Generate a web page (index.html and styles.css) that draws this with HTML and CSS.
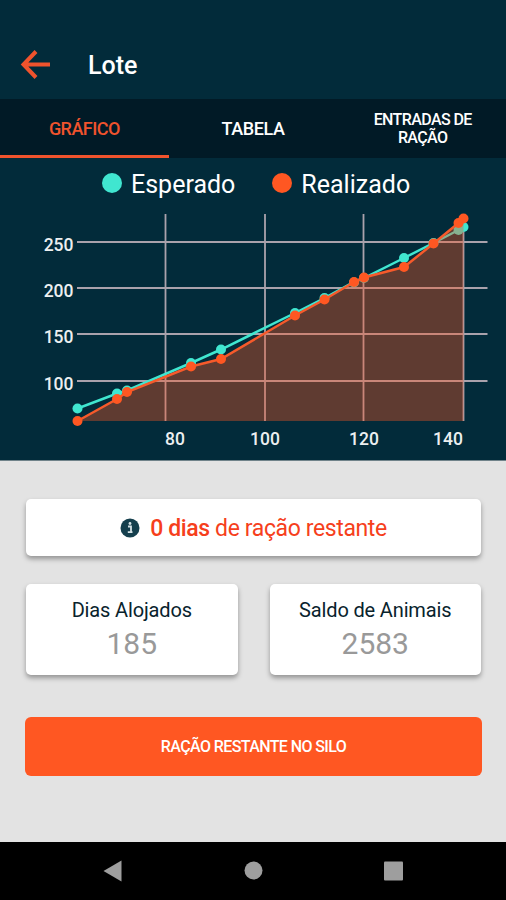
FILE: index.html
```html
<!DOCTYPE html>
<html lang="pt-BR">
<head>
    <meta charset="UTF-8">
    <meta name="viewport" content="width=device-width, initial-scale=1.0">
    <title>Lote</title>
    <link rel="stylesheet" href="styles.css">
</head>
<body>
    <div class="app">
        <header class="header">
            <svg class="back" width="30" height="30" viewBox="0 0 30 30">
                <path d="M30 13.500H4M16 0.500L3.500 13.500l12.500 13"/>
            </svg>
            <h1 class="title">Lote</h1>
        </header>
        <nav class="tabs">
            <div class="tab active"><span class="tab-text">GRÁFICO</span></div>
            <div class="tab"><span class="tab-text">TABELA</span></div>
            <div class="tab small"><span class="tab-text">ENTRADAS DE<br>RAÇÃO</span></div>
        </nav>
        <section class="chart">
            <div class="legend">
                <div class="legend-item"><span class="dot expected"></span><span class="legend-text">Esperado</span></div>
                <div class="legend-item"><span class="dot done"></span><span class="legend-text">Realizado</span></div>
            </div>
            <svg class="plot" width="506" height="252" viewBox="0 0 506 252">
                <g class="grid">
                    <path d="M77 33H487.500M77 79H487.500M77 125H487.500M77 172H487.500"/>
                    <path d="M165.500 5V212M265 5V212M363.500 5V212M463.500 5V212"/>
                </g>
                <!-- esperado -->
                <polyline class="line-expected" points="77.5,199.5 117,184.500 127,181.500 191,154 221,140.500 295,104 324.500,89 354,73 364,69 404,49 433.500,34 458.500,21 463.500,18"/>
                <g class="points-expected">
                    <circle cx="77.5" cy="199.5" r="5"/>
                    <circle cx="117" cy="184.5" r="5"/>
                    <circle cx="127" cy="181.5" r="5"/>
                    <circle cx="191" cy="154" r="5"/>
                    <circle cx="221" cy="140.5" r="5"/>
                    <circle cx="295" cy="104" r="5"/>
                    <circle cx="324.5" cy="89" r="5"/>
                    <circle cx="354" cy="73.5" r="5"/>
                    <circle cx="364" cy="69" r="5"/>
                    <circle cx="404" cy="49" r="5"/>
                    <circle cx="433.5" cy="34" r="5"/>
                    <circle cx="458.5" cy="21" r="5"/>
                    <circle cx="463.5" cy="18" r="5"/>
                </g>
                <!-- realizado -->
                <polygon class="area" points="77.5,212 117,190 127,183 191,157.500 221,150 295,106.500 324.500,90.500 354,73 364,68.500 404,58 433.500,34.500 458.500,14 463.500,9.500 463.500,212"/>
                <polyline class="line-done" points="77.5,212 117,190 127,183 191,157.500 221,150 295,106.500 324.500,90.500 354,73 364,68.500 404,58 433.500,34.500 458.500,14 463.500,9.500"/>
                <g class="points-done">
                    <circle cx="77.5" cy="212" r="5"/>
                    <circle cx="117" cy="190" r="5"/>
                    <circle cx="127" cy="183" r="5"/>
                    <circle cx="191" cy="157.5" r="5"/>
                    <circle cx="221" cy="150" r="5"/>
                    <circle cx="295" cy="106.5" r="5"/>
                    <circle cx="324.5" cy="90.5" r="5"/>
                    <circle cx="354" cy="73" r="5"/>
                    <circle cx="364" cy="68.5" r="5"/>
                    <circle cx="404" cy="58" r="5"/>
                    <circle cx="433.5" cy="34.5" r="5"/>
                    <circle cx="458.5" cy="14" r="5"/>
                    <circle cx="463.5" cy="9.5" r="5"/>
                </g>
                <g class="labels-y">
                    <text x="73.500" y="42">250</text>
                    <text x="73.500" y="88">200</text>
                    <text x="73.500" y="134">150</text>
                    <text x="73.500" y="181">100</text>
                </g>
                <g class="labels-x">
                    <text x="175" y="236">80</text>
                    <text x="265" y="236">100</text>
                    <text x="364" y="236">120</text>
                    <text x="448" y="236">140</text>
                </g>
            </svg>
        </section>
        <main class="content">
            <div class="card info">
                <svg class="info-icon" width="20" height="20" viewBox="0 0 20 20">
                    <circle cx="10" cy="10" r="9.500" fill="#153f4d"/>
                    <path d="M8 8.500h3v5.500M7.800 14.200h4.700" fill="none" stroke="#d5e2e5" stroke-width="1.800"/>
                    <circle cx="10" cy="5.500" r="1.400" fill="#d5e2e5"/>
                </svg>
                <p class="info-text"><b>0 dias</b> de ração restante</p>
            </div>
            <div class="row">
                <div class="card stat">
                    <p class="stat-name">Dias Alojados</p>
                    <p class="stat-value">185</p>
                </div>
                <div class="card stat">
                    <p class="stat-name">Saldo de Animais</p>
                    <p class="stat-value">2583</p>
                </div>
            </div>
            <button class="silo">RAÇÃO RESTANTE NO SILO</button>
        </main>
        <footer class="navbar">
            <svg width="20" height="22" viewBox="0 0 20 22"><path d="M0.500 11L18.500 0.500v21z"/></svg>
            <svg width="20" height="22" viewBox="0 0 20 22"><circle cx="10.500" cy="10.500" r="9"/></svg>
            <svg width="20" height="22" viewBox="0 0 20 22"><rect x="1" y="1.500" width="19" height="19" rx="1"/></svg>
        </footer>
    </div>
</body>
</html>
```
FILE: styles.css
```css
*{
    box-sizing: border-box;
}
body,h1,p{
    margin: 0;
}
body{
    font-family: Roboto, "Liberation Sans", sans-serif;
    background: #e3e3e3;
}
.app{
    display: flex;
    flex-direction: column;
    width: 506px;
    height: 900px;
    overflow: hidden;
}

.header{
    display: flex;
    align-items: center;
    height: 99px;
    padding: 32px 20px 0;
    gap: 38px;
    background: #022b3a;
}
.back{
    overflow: visible;
    fill: none;
    stroke: #f0532d;
    stroke-width: 4;
}
.title{
    color: #fff;
    font-size: 25px;
    font-weight: 500;
    line-height: 30px;
}

.tabs{
    display: grid;
    grid-template-columns: repeat(3,1fr);
    height: 59px;
    background: #011a26;
}
.tab{
    display: flex;
    align-items: center;
    justify-content: center;
    padding-top: 4px;
    border-bottom: 3px solid transparent;
    color: #fff;
    font-size: 18px;
    font-weight: 500;
    line-height: 18px;
    text-align: center;
    letter-spacing: -0.4px;
}
.active{
    color: #f0532d;
    border-color: #f0532d;
    letter-spacing: -0.55px;
}
.small{
    font-size: 16px;
    letter-spacing: -0.6px;
    padding-left: 2px;
}

.chart{
    height: 303px;
    background: #022b3a;
    border-bottom: 1px solid #70838a;
}
.legend{
    display: flex;
    height: 51px;
    padding: 11px 0 0 102px;
    gap: 37px;
}
.legend-item{
    display: flex;
    align-items: center;
    height: 30px;
    gap: 9px;
    color: #fff;
    font-size: 25px;
}
.dot{
    width: 20px;
    height: 20px;
    margin-top: -3px;
    border-radius: 50%;
}
.expected{
    background: #40e6d0;
}
.done{
    background: #ff5722;
}
.plot{
    display: block;
}
.grid{
    stroke: #aaa2ac;
    stroke-width: 1.8;
}
.area{
    fill: #ff5722;
    fill-opacity: 0.37;
}
.line-expected,.line-done{
    fill: none;
    stroke: #40e6d0;
    stroke-width: 2.5;
}
.line-done{
    stroke: #f65a2b;
}
.points-expected{
    fill: #40e6d0;
}
.points-done{
    fill: #ff5722;
}
.labels-y,.labels-x{
    fill: #eceff0;
    font-size: 17.5px;
    font-weight: 500;
    text-anchor: end;
}
.labels-x{
    text-anchor: middle;
}

.content{
    display: flex;
    flex-direction: column;
    height: 381px;
    padding: 38px 25px 0 26px;
}
.card{
    background: #fff;
    border-radius: 5px;
    box-shadow: 0 3px 5px rgba(0,0,0,0.35);
}
.info{
    display: flex;
    align-items: center;
    justify-content: center;
    height: 57px;
    gap: 10px;
}
.info-text{
    color: #f63f1c;
    font-size: 23px;
    line-height: 28px;
    padding-top: 2px;
    letter-spacing: -0.38px;
}
.info-text b{
    font-weight: 500;
}
.row{
    display: grid;
    grid-template-columns: 1fr 1fr;
    gap: 32px;
    margin-top: 28px;
}
.stat{
    height: 91px;
    padding-top: 13px;
    text-align: center;
}
.stat-name{
    color: #09232d;
    font-size: 20px;
    line-height: 26px;
    letter-spacing: -0.15px;
}
.stat-value{
    color: #999;
    font-size: 30px;
    line-height: 42px;
}
.silo{
    height: 59px;
    margin: 42px -1px 0;
    border: none;
    border-radius: 6px;
    background: #ff5722;
    color: #fff;
    font-family: inherit;
    font-size: 16px;
    font-weight: 500;
    letter-spacing: -0.6px;
}

.navbar{
    display: flex;
    justify-content: center;
    align-items: center;
    height: 58px;
    gap: 120px;
    background: #000;
    fill: #9e9e9e;
}
```
